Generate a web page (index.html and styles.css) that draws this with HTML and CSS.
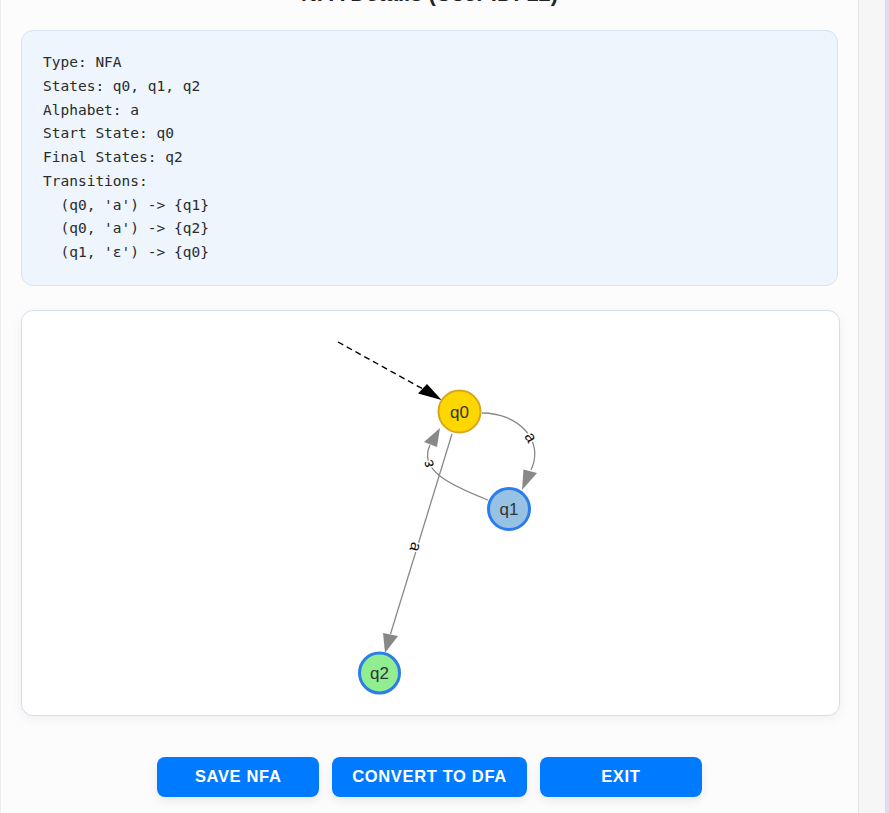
FILE: index.html
```html
<!DOCTYPE html>
<html lang="en">
<head>
<meta charset="utf-8">
<title>NFA Details</title>
<link rel="stylesheet" href="styles.css">
</head>
<body>
<div class="page">
  <main class="card">
    <h2 class="title">NFA Details (User ID: 12)</h2>
    <section class="info">
<pre class="info-text">Type: NFA
States: q0, q1, q2
Alphabet: a
Start State: q0
Final States: q2
Transitions:
  (q0, 'a') -&gt; {q1}
  (q0, 'a') -&gt; {q2}
  (q1, 'ε') -&gt; {q0}</pre>
    </section>
    <section class="graph">
      <svg class="graph-svg" viewBox="22 311 817 404" width="817" height="404" xmlns="http://www.w3.org/2000/svg">
        <!-- start arrow -->
        <line x1="338" y1="342" x2="423" y2="389" stroke="#000" stroke-width="1.4" stroke-dasharray="6 4"/>
        <polygon points="441.5,400 418,393.5 427,384" fill="#000"/>

        <!-- q0 -> q1 -->
        <path d="M482,413 C518,413 545,440 531,470" fill="none" stroke="#888" stroke-width="1.3"/>
        <polygon points="522,490 523.5,469.5 537,473" fill="#888"/>
        <text class="edge-label" transform="translate(531 437) rotate(60)">a</text>

        <!-- q1 -> q0 (epsilon) -->
        <path d="M488,500 C450,485 418,470 430,445" fill="none" stroke="#888" stroke-width="1.3"/>
        <polygon points="440,428 437,447 424,442" fill="#888"/>
        <text class="edge-label" transform="translate(428 464) rotate(-108)">ε</text>

        <!-- q0 -> q2 -->
        <line x1="452" y1="434" x2="390.5" y2="634" stroke="#888" stroke-width="1.3"/>
        <polygon points="385,653 383,633 398,636" fill="#888"/>
        <text class="edge-label" transform="translate(416 547) rotate(107)">a</text>

        <!-- nodes -->
        <circle cx="459.5" cy="411.5" r="21" fill="#ffd700" stroke="#d9a520" stroke-width="2"/>
        <text class="node-label" x="459.5" y="417.5">q0</text>

        <circle cx="509" cy="509" r="20.5" fill="#97c2e3" stroke="#2b7de9" stroke-width="3"/>
        <text class="node-label" x="509" y="515">q1</text>

        <circle cx="379.5" cy="673" r="20" fill="#90ee90" stroke="#2b7de9" stroke-width="3"/>
        <text class="node-label" x="379.5" y="679">q2</text>
      </svg>
    </section>
    <div class="actions">
      <button class="btn btn-save">Save NFA</button>
      <button class="btn btn-convert">Convert to DFA</button>
      <button class="btn btn-exit">Exit</button>
    </div>
  </main>
  <div class="gutter"></div>
  <div class="edge"></div>
</div>
</body>
</html>
```
FILE: styles.css
```css
html, body {
  margin: 0;
  padding: 0;
}

body {
  background: #f5f5f5;
  font-family: "Liberation Sans", Arial, sans-serif;
  color: #222;
  overflow: hidden;
}

.page {
  display: flex;
  align-items: flex-start;
  min-height: 813px;
}

.card {
  width: 859px;
  flex: 0 0 859px;
  box-sizing: border-box;
  margin-top: -21px;
  padding: 0 20px 40px;
  background: #fcfcfc;
  border-left: 1px solid #ececec;
  border-right: 1px solid #e3e3e3;
  border-radius: 0 0 10px 10px;
  box-shadow: 2px 0 10px rgba(0, 0, 0, 0.04);
}

.title {
  margin: 0 0 21px;
  height: 30px;
  font-size: 22px;
  line-height: 30px;
  font-weight: bold;
  text-align: center;
  color: #222;
}

.info {
  background: #eef5fc;
  border: 1px solid #d6e3f0;
  border-radius: 12px;
  padding: 20px 21px;
}

.info-text {
  margin: 0;
  font-family: "DejaVu Sans Mono", "Liberation Mono", monospace;
  font-size: 14.5px;
  line-height: 23.75px;
  color: #2b2b2b;
}

.graph {
  margin-top: 24px;
  width: calc(100% + 2px);
  height: 406px;
  box-sizing: border-box;
  background: #fff;
  border: 1px solid #d2deec;
  border-radius: 12px;
  box-shadow: 0 3px 12px rgba(0, 0, 0, 0.05);
  overflow: hidden;
}

.graph-svg {
  display: block;
}

.edge-label {
  font-family: "Liberation Sans", Arial, sans-serif;
  font-size: 16px;
  fill: #111;
  text-anchor: middle;
  dominant-baseline: central;
  paint-order: stroke;
  stroke: #fff;
  stroke-width: 3px;
}

.node-label {
  font-family: "Liberation Sans", Arial, sans-serif;
  font-size: 17px;
  fill: #333;
  text-anchor: middle;
}

.actions {
  margin-top: 41px;
  display: flex;
  justify-content: center;
  gap: 13px;
}

.btn {
  height: 40px;
  min-width: 162px;
  padding: 0 20px;
  border: none;
  border-radius: 8px;
  background: #007bff;
  color: #fff;
  font-family: "Liberation Sans", Arial, sans-serif;
  font-size: 16.5px;
  font-weight: bold;
  letter-spacing: 0.65px;
  text-transform: uppercase;
  box-shadow: 0 4px 10px rgba(0, 0, 0, 0.08);
  cursor: pointer;
}

.gutter {
  flex: 1;
  align-self: stretch;
  background: #f6f6f6;
}

.edge {
  width: 4px;
  flex: 0 0 4px;
  align-self: stretch;
  background: #d8e2ee;
}
```
